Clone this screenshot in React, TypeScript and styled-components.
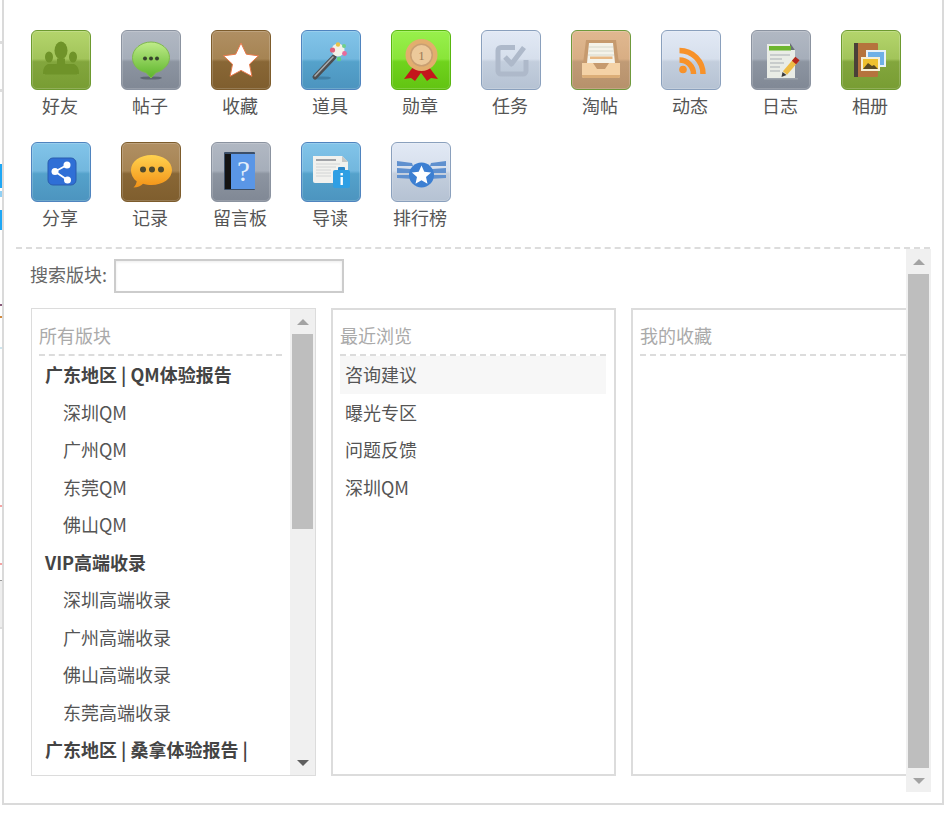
import { ReactNode } from "react";
import styled, { createGlobalStyle } from "styled-components";

type Tone = "green" | "gray" | "brown" | "blue" | "lime" | "pale" | "tan";

const tones: Record<Tone, { border: string; top: string; mid: string; low: string; bottom: string }> = {
  green: { border: "#6d9a2f", top: "#b4d56c", mid: "#a2c45a", low: "#83a63d", bottom: "#789d33" },
  gray: { border: "#8b93a0", top: "#b1b8c3", mid: "#a6aeba", low: "#8d95a1", bottom: "#808895" },
  brown: { border: "#7d5c2c", top: "#b08f63", mid: "#a68453", low: "#896736", bottom: "#7f5e2e" },
  blue: { border: "#4f84bf", top: "#82c4e9", mid: "#72b7de", low: "#55a2cb", bottom: "#4c94bf" },
  lime: { border: "#58b60f", top: "#98f04c", mid: "#89e539", low: "#70d31d", bottom: "#62c412" },
  pale: { border: "#8aa0bd", top: "#e2e9f5", mid: "#d6dfec", low: "#c3cedd", bottom: "#b5c2d3" },
  tan: { border: "#6f9a3c", top: "#e0b890", mid: "#d8ae84", low: "#c09b76", bottom: "#b6916b" },
};

const Friends = () => (
  <svg width="60" height="60" viewBox="0 0 60 60">
    <g fill="#6f9329">
      <ellipse cx="18" cy="27" rx="4" ry="5.500" />
      <ellipse cx="42" cy="27" rx="4" ry="5.500" />
      <path d="M12 44c0-5 1-8 5-10h26c4 2 5 5 5 10z" />
      <ellipse cx="30" cy="20.500" rx="6.500" ry="9" />
      <path d="M14 44.500c0-6 8-8 12-11v-5h8v5c4 3 12 5 12 11z" />
    </g>
  </svg>
);

const Bubble = () => (
  <svg width="60" height="60" viewBox="0 0 60 60">
    <defs>
      <linearGradient id="bubbleFill" x1="0" y1="0" x2="0" y2="1">
        <stop offset="0" stopColor="#c0ec8a" />
        <stop offset="1" stopColor="#5cb52a" />
      </linearGradient>
    </defs>
    <ellipse cx="30" cy="48" rx="11" ry="1.600" fill="#5d6672" />
    <path d="M30 12c10 0 18.500 7 18.500 15.500S40 41.500 35 42.500L30 48l-5-5.500C18 41 11.500 36 11.500 27.500S20 12 30 12z" fill="url(#bubbleFill)" stroke="#7fb84e" />
    <g fill="#37452c">
      <circle cx="24" cy="28.500" r="2" />
      <circle cx="30" cy="28.500" r="2" />
      <circle cx="36" cy="28.500" r="2" />
    </g>
  </svg>
);

const Star = () => (
  <svg width="60" height="60" viewBox="0 0 60 60">
    <path
      d="M30 13l5.300 11.200 12.200 1.600-9 8.400 2.400 12.100L30 40.400l-10.900 5.900 2.400-12.100-9-8.400 12.200-1.600z"
      fill="#fff"
      stroke="#e8794a"
      strokeWidth="1"
      strokeLinejoin="round"
    />
  </svg>
);

const Wand = () => (
  <svg width="60" height="60" viewBox="0 0 60 60">
    <ellipse cx="21" cy="48" rx="9" ry="1.600" fill="#3f7fa5" />
    <path d="M14 47l19-20" stroke="#4d4f52" strokeWidth="5" strokeLinecap="round" />
    <path d="M14 46l18-19" stroke="#a9adb1" strokeWidth="1.500" strokeLinecap="round" />
    <circle cx="37" cy="20" r="6.500" fill="#f4f1e8" />
    <circle cx="31.500" cy="20" r="2.600" fill="#e0607c" />
    <circle cx="37" cy="14.500" r="2.200" fill="#e8c24a" />
    <circle cx="43" cy="16" r="2" fill="#6fd08a" />
    <circle cx="43.500" cy="23.500" r="2.400" fill="#e86a9c" />
    <circle cx="38" cy="29" r="2.200" fill="#62d27a" />
  </svg>
);

const Medal = () => (
  <svg width="60" height="60" viewBox="0 0 60 60">
    <path d="M22 37L13 49l7-1 4 3 8-11z" fill="#c4161c" />
    <path d="M38 37l9 12-7-1-4 3-8-11z" fill="#c4161c" />
    <circle cx="30.500" cy="25" r="16" fill="#e2ae6e" />
    <circle cx="30.500" cy="25" r="11.500" fill="#c99f72" />
    <circle cx="30.500" cy="25" r="10" fill="#ecc99a" />
    <text x="30.500" y="30" fontSize="13" fontFamily="Liberation Serif, serif" textAnchor="middle" fill="#9a7a55">1</text>
  </svg>
);

const Task = () => (
  <svg width="60" height="60" viewBox="0 0 60 60">
    <g fill="none" stroke="#aeb9ca" strokeWidth="5" strokeLinejoin="round">
      <path d="M34 17.500H20a3 3 0 0 0-3 3V41a3 3 0 0 0 3 3h22a3 3 0 0 0 3-3V30" />
      <path d="M24 27l6.500 7L43 17.500" />
    </g>
  </svg>
);

const Inbox = () => (
  <svg width="60" height="60" viewBox="0 0 60 60">
    <path d="M15 10h30l3 24v12H12V34z" fill="#c69a6e" />
    <path d="M18 13h24l2 20H16z" fill="#f5f3ea" />
    <path d="M18 17h24M17.500 21h25M17 25h26" stroke="#d6d8cc" />
    <rect x="19" y="26.500" width="22.500" height="2.500" fill="#e8b884" />
    <path d="M11 33h11l4 6h8l4-6h11v13a2 2 0 0 1-2 2H13a2 2 0 0 1-2-2z" fill="#f4d2a6" />
    <path d="M11 45h38v1a2 2 0 0 1-2 2H13a2 2 0 0 1-2-2z" fill="#dcae78" />
  </svg>
);

const Rss = () => (
  <svg width="60" height="60" viewBox="0 0 60 60">
    <circle cx="22" cy="39.500" r="3.800" fill="#f7922a" />
    <g fill="none" stroke="#f7922a" strokeWidth="5.500">
      <path d="M18.500 20.500A23.500 23.500 0 0 1 42 44" />
      <path d="M18.500 30A14 14 0 0 1 32.500 44" />
    </g>
  </svg>
);

const Journal = () => (
  <svg width="60" height="60" viewBox="0 0 60 60">
    <rect x="13" y="48" width="34" height="1.500" fill="#9aa1ab" />
    <path d="M16 14h23l5 6v28H16z" fill="#e9ece6" />
    <path d="M39 13l5 7h-5z" fill="#6a6f76" />
    <rect x="18" y="16" width="22" height="4.500" fill="#6db52e" />
    <path d="M19 25h20M19 29h12M19 33h14M19 37h10M19 41h10" stroke="#a7adb2" />
    <path d="M34 43l12-14" stroke="#eebc45" strokeWidth="5.500" />
    <path d="M43 32.500l3.500-4" stroke="#b3261e" strokeWidth="5.500" />
    <path d="M30.500 47l1-5 4 3z" fill="#3b3b3b" />
  </svg>
);

const Album = () => (
  <svg width="60" height="60" viewBox="0 0 60 60">
    <rect x="13" y="13" width="24" height="34" rx="1" fill="#b5733d" />
    <rect x="13" y="13" width="4" height="34" fill="#4a4038" />
    <rect x="25" y="20" width="20" height="17" fill="#e9f1f7" />
    <rect x="27" y="22" width="16" height="13" fill="#6fb0e6" />
    <rect x="20" y="27" width="19" height="14" fill="#f5efd6" />
    <rect x="22" y="29" width="15" height="10" fill="#efc02f" />
    <path d="M22 39l5-6 4 3 2-1 4 4z" fill="#5a4a24" />
  </svg>
);

const Share = () => (
  <svg width="60" height="60" viewBox="0 0 60 60">
    <rect x="17" y="16" width="28" height="27" rx="5" fill="#2f6fd6" stroke="#2a5cae" />
    <path d="M36 23l-12 6.500 12.500 8.500" fill="none" stroke="#fff" strokeWidth="1.800" />
    <circle cx="36" cy="23" r="3.500" fill="#fff" />
    <circle cx="24" cy="29.500" r="3.500" fill="#fff" />
    <circle cx="36.500" cy="38" r="3.500" fill="#fff" />
  </svg>
);

const Chat = () => (
  <svg width="60" height="60" viewBox="0 0 60 60">
    <defs>
      <linearGradient id="chatFill" x1="0" y1="0" x2="0" y2="1">
        <stop offset="0" stopColor="#ffd24f" />
        <stop offset="1" stopColor="#f39317" />
      </linearGradient>
    </defs>
    <path d="M30.500 13C42 13 51 19.500 51 28s-9 15-20.500 15c-3 0-6-.4-8.500-1.200-2 2.200-5.500 3.700-9.500 3.700 2-2 3-4 3.200-6.200C12.300 36.800 10 32.700 10 28c0-8.500 9-15 20.500-15z" fill="url(#chatFill)" />
    <g fill="#4f4a2e">
      <circle cx="22" cy="27.500" r="3" />
      <circle cx="31" cy="27.500" r="3" />
      <circle cx="40" cy="27.500" r="3" />
    </g>
  </svg>
);

const BookHelp = () => (
  <svg width="60" height="60" viewBox="0 0 60 60">
    <rect x="13" y="10" width="31" height="38" rx="1" fill="#3c4f68" />
    <rect x="14" y="12" width="6" height="35" fill="#141414" />
    <rect x="20" y="12" width="24" height="35" fill="#5a96e6" />
    <text x="32.500" y="39" fontSize="29" fontFamily="Liberation Serif, serif" textAnchor="middle" fill="#e3eefb">?</text>
  </svg>
);

const Guide = () => (
  <svg width="60" height="60" viewBox="0 0 60 60">
    <path d="M12 14h29l6 6v21H14a2 2 0 0 1-2-2z" fill="#f1f1ee" />
    <path d="M41 14l6 6h-6z" fill="#c7c8c6" />
    <path d="M15 18h20" stroke="#a0a2a6" strokeWidth="2" />
    <path d="M15 22h24M15 25h20M15 28h15M15 31h15M15 34h15" stroke="#d2d4d4" />
    <rect x="37" y="25" width="7" height="5" rx="1" fill="#2a86c9" />
    <rect x="32" y="28" width="17" height="18" rx="2" fill="#2f9fe4" />
    <rect x="39.500" y="31" width="2.400" height="2.400" fill="#fff" />
    <rect x="39.500" y="35" width="2.400" height="8" fill="#fff" />
  </svg>
);

const Rank = () => (
  <svg width="60" height="60" viewBox="0 0 60 60">
    <g fill="#5f90cf">
      <path d="M6 19l15 2 1 3H6z" />
      <path d="M6 26l14 1 1 4H6z" />
      <path d="M6 33h15l2 4-17-1z" />
      <path d="M55 19l-15 2-1 3h16z" />
      <path d="M55 26l-14 1-1 4h15z" />
      <path d="M55 33H40l-2 4 17-1z" />
    </g>
    <circle cx="30.500" cy="33" r="12.500" fill="#3c7fd2" />
    <path d="M30.500 23.500l2.800 6.300 6.800.7-5.100 4.500 1.500 6.700-6-3.500-6 3.500 1.500-6.700-5.100-4.500 6.800-.7z" fill="#fff" />
  </svg>
);

const shortcuts: { label: string; tone: Tone; icon: ReactNode }[] = [
  { label: "好友", tone: "green", icon: <Friends /> },
  { label: "帖子", tone: "gray", icon: <Bubble /> },
  { label: "收藏", tone: "brown", icon: <Star /> },
  { label: "道具", tone: "blue", icon: <Wand /> },
  { label: "勋章", tone: "lime", icon: <Medal /> },
  { label: "任务", tone: "pale", icon: <Task /> },
  { label: "淘帖", tone: "tan", icon: <Inbox /> },
  { label: "动态", tone: "pale", icon: <Rss /> },
  { label: "日志", tone: "gray", icon: <Journal /> },
  { label: "相册", tone: "green", icon: <Album /> },
  { label: "分享", tone: "blue", icon: <Share /> },
  { label: "记录", tone: "brown", icon: <Chat /> },
  { label: "留言板", tone: "gray", icon: <BookHelp /> },
  { label: "导读", tone: "blue", icon: <Guide /> },
  { label: "排行榜", tone: "pale", icon: <Rank /> },
];

const allForums: { name: string; group?: boolean }[] = [
  { name: "广东地区 | QM体验报告", group: true },
  { name: "深圳QM" },
  { name: "广州QM" },
  { name: "东莞QM" },
  { name: "佛山QM" },
  { name: "VIP高端收录", group: true },
  { name: "深圳高端收录" },
  { name: "广州高端收录" },
  { name: "佛山高端收录" },
  { name: "东莞高端收录" },
  { name: "广东地区 | 桑拿体验报告 |", group: true },
];

const recent = ["咨询建议", "曝光专区", "问题反馈", "深圳QM"];

// bits of the page behind the dialog that peek out on the left
const peeks = [
  { gap: 41, h: 3, color: "#ddd" },
  { gap: 45, h: 3, color: "#ddd" },
  { gap: 72, h: 24, color: "#1ea7f5" },
  { gap: 3, h: 6, color: "#8fd0f5" },
  { gap: 13, h: 20, color: "#1ea7f5" },
  { gap: 74, h: 2, color: "#8a5a7a" },
  { gap: 10, h: 2, color: "#d08a40" },
  { gap: 29, h: 2, color: "#cfe6ee" },
  { gap: 156, h: 2, color: "#f5a3a3" },
  { gap: 56, h: 2, color: "#f5a3a3" },
  { gap: 15, h: 1, color: "#999" },
  { gap: 0, h: 46, color: "#eee" },
  { gap: 0, h: 2, color: "#ddd" },
];

function ScrollBar({ thumb, tail, full }: { thumb: number; tail: number; full?: boolean }) {
  return (
    <Track>
      <ArrowButton>
        <ArrowUp />
      </ArrowButton>
      <Thumb $size={thumb} />
      <TrackRest $size={tail} />
      <ArrowButton>
        <ArrowDown $dim={full} />
      </ArrowButton>
    </Track>
  );
}

export default function App() {
  return (
    <>
      <GlobalStyle />
      <Page>
        <Gutter>
          {peeks.map((p, i) => (
            <Peek key={i} $gap={p.gap} $h={p.h} $color={p.color} />
          ))}
        </Gutter>
        <Dialog>
          <ShortcutGrid>
            {shortcuts.map((s) => (
              <Shortcut key={s.label}>
                <Tile $tone={s.tone}>{s.icon}</Tile>
                <ShortcutLabel>{s.label}</ShortcutLabel>
              </Shortcut>
            ))}
          </ShortcutGrid>
          <Body>
            <Main>
              <SearchRow>
                <SearchLabel>搜索版块:</SearchLabel>
                <SearchInput type="text" />
              </SearchRow>
              <Panels>
                <Panel $thin>
                  <PanelList $thin>
                    <PanelTitle>所有版块</PanelTitle>
                    {allForums.map((f) => (
                      <ForumRow key={f.name} $group={f.group} $indent={f.group ? 6 : 24}>
                        {f.name}
                      </ForumRow>
                    ))}
                  </PanelList>
                  <ScrollBar thumb={195} tail={221} />
                </Panel>
                <Panel>
                  <PanelList>
                    <PanelTitle>最近浏览</PanelTitle>
                    {recent.map((name, i) => (
                      <ForumRow key={name} $indent={5} $active={i === 0}>
                        {name}
                      </ForumRow>
                    ))}
                  </PanelList>
                </Panel>
                <Panel>
                  <PanelList>
                    <PanelTitle>我的收藏</PanelTitle>
                  </PanelList>
                </Panel>
              </Panels>
            </Main>
            <ScrollBar thumb={494} tail={0} full />
          </Body>
        </Dialog>
      </Page>
    </>
  );
}

const GlobalStyle = createGlobalStyle`
  html, body, #root {
    margin: 0;
    padding: 0;
    background: #fff;
    overflow: hidden;
  }
  body {
    font-family: "Noto Sans CJK SC", "Liberation Sans", sans-serif;
    font-size: 18px;
    color: #555;
  }
`;

const Page = styled.div`
  display: flex;
  width: 945px;
  height: 817px;
  overflow: hidden;
`;

const Gutter = styled.div`
  display: flex;
  flex-direction: column;
  width: 2px;
  flex-shrink: 0;
`;

const Peek = styled.div<{ $gap: number; $h: number; $color: string }>`
  margin-top: ${({ $gap }) => $gap}px;
  height: ${({ $h }) => $h}px;
  background: ${({ $color }) => $color};
`;

const Dialog = styled.div`
  box-sizing: border-box;
  width: 942px;
  height: 805px;
  flex-shrink: 0;
  border: 2px solid #dadada;
  border-top: 0;
  background: #fff;
`;

const ShortcutGrid = styled.div`
  display: flex;
  flex-wrap: wrap;
  row-gap: 20px;
  box-sizing: border-box;
  width: 914px;
  margin-left: 12px;
  padding-top: 30px;
  padding-bottom: 13px;
  border-bottom: 2px dashed #dcdcdc;
`;

const Shortcut = styled.div`
  display: flex;
  flex-direction: column;
  align-items: center;
  width: 90px;
  height: 92px;
`;

const Tile = styled.div<{ $tone: Tone }>`
  box-sizing: border-box;
  width: 60px;
  height: 60px;
  border-radius: 6px;
  overflow: hidden;
  border: 1px solid ${({ $tone }) => tones[$tone].border};
  box-shadow: inset 0 0 0 1px rgba(255, 255, 255, 0.18);
  background: linear-gradient(
    ${({ $tone }) => tones[$tone].top} 0,
    ${({ $tone }) => tones[$tone].mid} 48%,
    ${({ $tone }) => tones[$tone].low} 53%,
    ${({ $tone }) => tones[$tone].bottom} 100%
  );

  svg {
    display: block;
    margin: -1px;
  }
`;

const ShortcutLabel = styled.span`
  margin-left: -2px;
  line-height: 30px;
  white-space: nowrap;
  color: #555;
`;

const Body = styled.div`
  display: flex;
  width: 927px;
  height: 543px;
`;

const Main = styled.div`
  box-sizing: border-box;
  width: 902px;
  flex-shrink: 0;
  padding-left: 27px;
  overflow: hidden;
`;

const SearchRow = styled.div`
  display: flex;
  align-items: center;
  height: 34px;
  margin-top: 10px;
`;

const SearchLabel = styled.span`
  width: 84px;
  margin-left: -1px;
  padding-bottom: 4px;
  color: #666;
  white-space: nowrap;
`;

const SearchInput = styled.input`
  box-sizing: border-box;
  width: 230px;
  height: 34px;
  border: 2px solid #ccc;
  outline: none;
  background: #fff;
  box-shadow: inset 0 1px 3px rgba(0, 0, 0, 0.08);
`;

const Panels = styled.div`
  display: flex;
  gap: 15px;
  margin-top: 15px;
  width: 900px;
`;

const Panel = styled.div<{ $thin?: boolean }>`
  display: flex;
  box-sizing: border-box;
  flex: 0 0 285px;
  height: 468px;
  border: ${({ $thin }) => ($thin ? "1px" : "2px")} solid #dcdcdc;
  overflow: hidden;
`;

const PanelList = styled.div<{ $thin?: boolean }>`
  flex: 1;
  min-width: 0;
  padding: ${({ $thin }) => ($thin ? "1px" : "0")} 8px 0 7px;
  overflow: hidden;
`;

const PanelTitle = styled.div`
  height: 36px;
  padding-top: 8px;
  line-height: 34px;
  color: #aaa;
  border-bottom: 2px dashed #dcdcdc;
`;

const ForumRow = styled.div<{ $group?: boolean; $indent: number; $active?: boolean }>`
  height: 37.5px;
  line-height: 37px;
  padding-left: ${({ $indent }) => $indent}px;
  white-space: nowrap;
  font-weight: ${({ $group }) => ($group ? 700 : 400)};
  color: ${({ $group }) => ($group ? "#444" : "#555")};
  background: ${({ $active }) => ($active ? "#f7f7f7" : "transparent")};
`;

const Track = styled.div`
  display: flex;
  flex-direction: column;
  align-items: center;
  flex: 0 0 25px;
  background: #f0f0f0;
`;

const ArrowButton = styled.div`
  display: flex;
  align-items: center;
  justify-content: center;
  width: 100%;
  height: 25px;
  flex-shrink: 0;
`;

const ArrowUp = styled.div`
  width: 0;
  height: 0;
  border-left: 6px solid transparent;
  border-right: 6px solid transparent;
  border-bottom: 6px solid #a3a3a3;
`;

const ArrowDown = styled.div<{ $dim?: boolean }>`
  width: 0;
  height: 0;
  border-left: 6px solid transparent;
  border-right: 6px solid transparent;
  border-top: 6px solid ${({ $dim }) => ($dim ? "#a3a3a3" : "#5f5f5f")};
`;

const Thumb = styled.div<{ $size: number }>`
  width: 21px;
  height: ${({ $size }) => $size}px;
  flex-shrink: 0;
  background: #bebebe;
`;

const TrackRest = styled.div<{ $size: number }>`
  height: ${({ $size }) => $size}px;
  flex-shrink: 0;
`;
